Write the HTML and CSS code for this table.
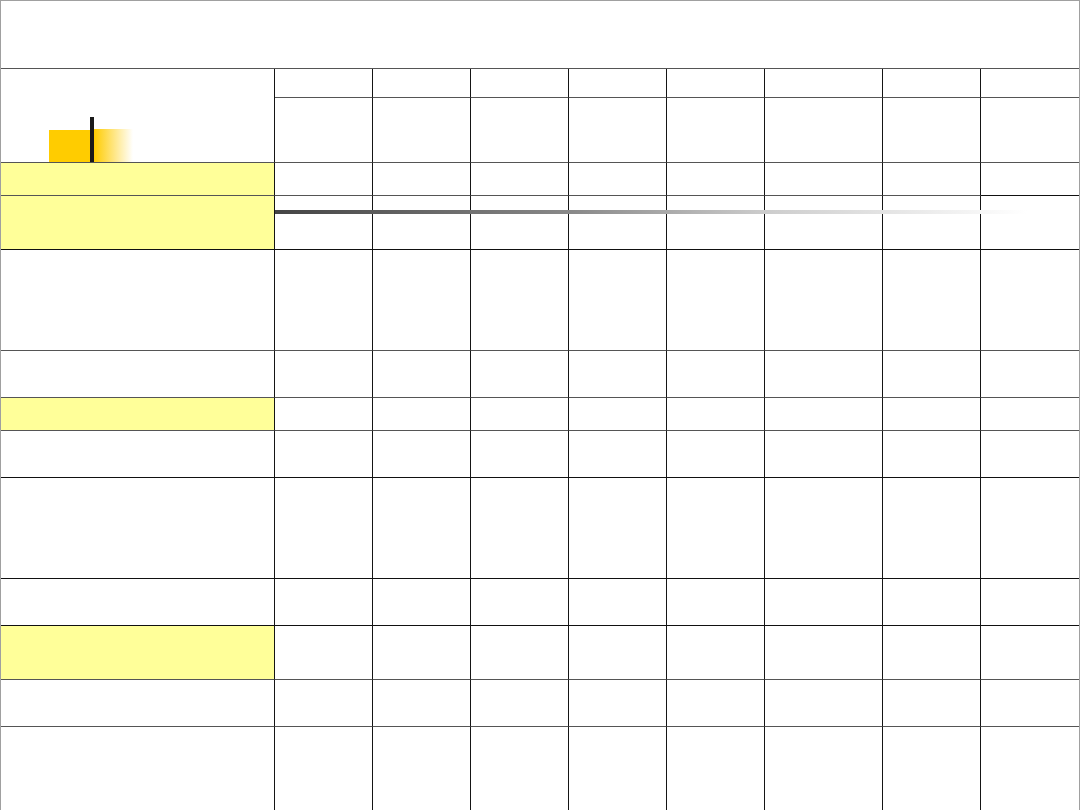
FILE: index.html
```html
<!DOCTYPE html>
<html lang="en">
<head>
<meta charset="utf-8">
<title>Table slide</title>
<link rel="stylesheet" href="styles.css">
</head>
<body>
<div class="slide">
  <div class="title"></div>
  <div class="grid">
    <div class="c first head"></div>
    <div class="c h1"></div><div class="c h1"></div><div class="c h1"></div><div class="c h1"></div><div class="c h1"></div><div class="c h1"></div><div class="c h1"></div><div class="c h1 last"></div>
    <div class="c h2"></div><div class="c h2"></div><div class="c h2"></div><div class="c h2"></div><div class="c h2"></div><div class="c h2"></div><div class="c h2"></div><div class="c h2 last"></div>

    <div class="c first yellow r33"></div><div class="c r33"></div><div class="c r33"></div><div class="c r33"></div><div class="c r33"></div><div class="c r33"></div><div class="c r33"></div><div class="c r33"></div><div class="c r33 last dark"></div>
    <div class="c first yellow r54 dark"></div><div class="c r54 dark"></div><div class="c r54 dark"></div><div class="c r54 dark"></div><div class="c r54 dark"></div><div class="c r54 dark"></div><div class="c r54 dark"></div><div class="c r54 dark"></div><div class="c r54 last dark"></div>
    <div class="c first r101"></div><div class="c r101"></div><div class="c r101"></div><div class="c r101"></div><div class="c r101"></div><div class="c r101"></div><div class="c r101"></div><div class="c r101"></div><div class="c r101 last"></div>
    <div class="c first r47"></div><div class="c r47"></div><div class="c r47"></div><div class="c r47"></div><div class="c r47"></div><div class="c r47"></div><div class="c r47"></div><div class="c r47"></div><div class="c r47 last"></div>
    <div class="c first yellow r33"></div><div class="c r33"></div><div class="c r33"></div><div class="c r33"></div><div class="c r33"></div><div class="c r33"></div><div class="c r33"></div><div class="c r33"></div><div class="c r33 last"></div>
    <div class="c first r47 dark"></div><div class="c r47 dark"></div><div class="c r47 dark"></div><div class="c r47 dark"></div><div class="c r47 dark"></div><div class="c r47 dark"></div><div class="c r47 dark"></div><div class="c r47 dark"></div><div class="c r47 last dark"></div>
    <div class="c first r101 dark"></div><div class="c r101 dark"></div><div class="c r101 dark"></div><div class="c r101 dark"></div><div class="c r101 dark"></div><div class="c r101 dark"></div><div class="c r101 dark"></div><div class="c r101 dark"></div><div class="c r101 last dark"></div>
    <div class="c first r47 dark"></div><div class="c r47 dark"></div><div class="c r47 dark"></div><div class="c r47 dark"></div><div class="c r47 dark"></div><div class="c r47 dark"></div><div class="c r47 dark"></div><div class="c r47 dark"></div><div class="c r47 last dark"></div>
    <div class="c first yellow r54"></div><div class="c r54"></div><div class="c r54"></div><div class="c r54"></div><div class="c r54"></div><div class="c r54"></div><div class="c r54"></div><div class="c r54"></div><div class="c r54 last"></div>
    <div class="c first r47"></div><div class="c r47"></div><div class="c r47"></div><div class="c r47"></div><div class="c r47"></div><div class="c r47"></div><div class="c r47"></div><div class="c r47"></div><div class="c r47 last"></div>
    <div class="c first r101 open"></div><div class="c r101 open"></div><div class="c r101 open"></div><div class="c r101 open"></div><div class="c r101 open"></div><div class="c r101 open"></div><div class="c r101 open"></div><div class="c r101 open"></div><div class="c r101 last open"></div>
  </div>
  <div class="deco">
    <span class="deco-solid"></span>
    <span class="deco-bar"></span>
    <span class="deco-fade"></span>
  </div>
  <div class="rule"></div>
</div>
</body>
</html>
```

FILE: styles.css
```css
html, body {
  margin: 0;
  padding: 0;
  background: #ffffff;
  font-family: "Liberation Sans", Arial, sans-serif;
}

.slide {
  position: relative;
  width: 1080px;
  height: 810px;
  overflow: hidden;
  background: #ffffff;
}

.slide::after {
  content: "";
  position: absolute;
  left: 0;
  top: 0;
  right: 0;
  bottom: 0;
  border: 1px solid #a0a0a0;
  border-bottom: none;
  pointer-events: none;
}

.title {
  height: 68px;
}

.grid {
  display: grid;
  grid-template-columns: 275px 98px 98px 98px 98px 98px 118px 98px 99px;
  border-top: 1px solid #555555;
}

.c {
  box-sizing: border-box;
  border-right: 1px solid #151515;
  border-bottom: 1px solid #555555;
  background: #ffffff;
}

.c.dark {
  border-bottom-color: #111111;
}

.c.open {
  border-bottom: none;
}

.c.last {
  border-right-color: #a0a0a0;
}

.head {
  grid-row: span 2;
  height: 94px;
}

.h1 { height: 29px; }
.h2 { height: 65px; }
.r33 { height: 33px; }
.r47 { height: 47px; }
.r54 { height: 54px; }
.r101 { height: 101px; }

.yellow {
  background: #ffff99;
}

.deco {
  position: absolute;
  left: 49px;
  top: 117px;
  width: 84px;
  height: 45px;
}

.deco-solid {
  position: absolute;
  left: 0;
  top: 13px;
  width: 41px;
  height: 32px;
  background: #ffcc00;
}

.deco-bar {
  position: absolute;
  left: 41px;
  top: 0;
  width: 4px;
  height: 45px;
  background: #1a1a1a;
}

.deco-fade {
  position: absolute;
  left: 45px;
  top: 12px;
  width: 39px;
  height: 33px;
  background: linear-gradient(to right, #ffcc00, #ffffff);
}

.rule {
  position: absolute;
  left: 275px;
  top: 210px;
  width: 752px;
  height: 4px;
  background: linear-gradient(to right, #444444, #8a8a8a 40%, #cccccc 65%, #ffffff);
}
```
